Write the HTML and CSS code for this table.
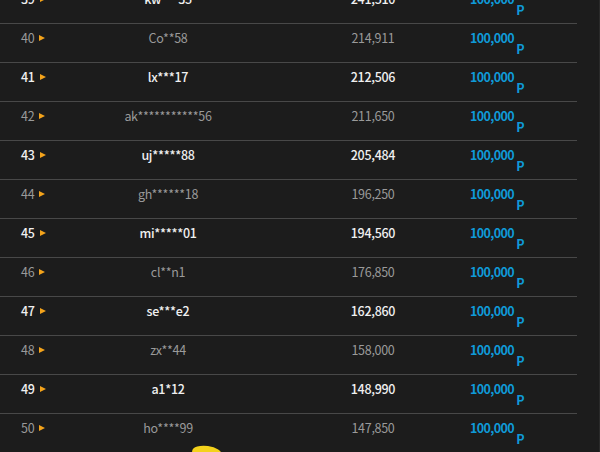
FILE: index.html
```html
<!DOCTYPE html>
<html lang="ko">
<head>
<meta charset="utf-8">
<link rel="stylesheet" href="styles.css">
</head>
<body>
<div class="page">
  <div class="board">
    <div class="row strong"><div class="rank">39<span class="arrow"></span></div><div class="name">kw***35</div><div class="score">241,510</div><div class="reward">100,000<span class="unit">P</span></div></div>
    <div class="row"><div class="rank">40<span class="arrow"></span></div><div class="name">Co**58</div><div class="score">214,911</div><div class="reward">100,000<span class="unit">P</span></div></div>
    <div class="row strong"><div class="rank">41<span class="arrow"></span></div><div class="name">lx***17</div><div class="score">212,506</div><div class="reward">100,000<span class="unit">P</span></div></div>
    <div class="row"><div class="rank">42<span class="arrow"></span></div><div class="name">ak***********56</div><div class="score">211,650</div><div class="reward">100,000<span class="unit">P</span></div></div>
    <div class="row strong"><div class="rank">43<span class="arrow"></span></div><div class="name">uj*****88</div><div class="score">205,484</div><div class="reward">100,000<span class="unit">P</span></div></div>
    <div class="row"><div class="rank">44<span class="arrow"></span></div><div class="name">gh******18</div><div class="score">196,250</div><div class="reward">100,000<span class="unit">P</span></div></div>
    <div class="row strong"><div class="rank">45<span class="arrow"></span></div><div class="name">mi*****01</div><div class="score">194,560</div><div class="reward">100,000<span class="unit">P</span></div></div>
    <div class="row"><div class="rank">46<span class="arrow"></span></div><div class="name">cl**n1</div><div class="score">176,850</div><div class="reward">100,000<span class="unit">P</span></div></div>
    <div class="row strong"><div class="rank">47<span class="arrow"></span></div><div class="name">se***e2</div><div class="score">162,860</div><div class="reward">100,000<span class="unit">P</span></div></div>
    <div class="row"><div class="rank">48<span class="arrow"></span></div><div class="name">zx**44</div><div class="score">158,000</div><div class="reward">100,000<span class="unit">P</span></div></div>
    <div class="row strong"><div class="rank">49<span class="arrow"></span></div><div class="name">a1*12</div><div class="score">148,990</div><div class="reward">100,000<span class="unit">P</span></div></div>
    <div class="row"><div class="rank">50<span class="arrow"></span></div><div class="name">ho****99</div><div class="score">147,850</div><div class="reward">100,000<span class="unit">P</span></div></div>
  </div>
  <div class="blob"></div>
</div>
</body>
</html>
```
FILE: styles.css
```css
html, body {
  margin: 0;
  padding: 0;
  background: #1c1c1c;
  overflow: hidden;
}
.page {
  position: relative;
  width: 600px;
  height: 452px;
  overflow: hidden;
  border-right: 1px solid #2a2a2a;
  box-sizing: border-box;
  font-family: "Noto Sans CJK KR", "Noto Sans", sans-serif;
  font-size: 12.5px;
  line-height: 18px;
  letter-spacing: -0.3px;
  color: #9a9a9a;
}
.board {
  width: 577px;
  margin-top: -15px;
}
.row {
  display: grid;
  grid-template-columns: 60px 216px 194px 1fr;
  align-items: baseline;
  padding-top: 5px;
  height: 33px;
  border-bottom: 1px solid #484848;
}
.row.strong {
  color: #f0f0f0;
  font-weight: 500;
}
.rank {
  padding-left: 21px;
  display: flex;
  align-items: center;
  gap: 5px;
}
.arrow {
  width: 0;
  height: 0;
  border-top: 3px solid transparent;
  border-bottom: 3px solid transparent;
  border-left: 6px solid #f3a31b;
}
.name, .score {
  text-align: center;
}
.reward {
  color: #0f9ad8;
  font-weight: 700;
  letter-spacing: -0.6px;
}
.unit {
  position: relative;
  top: 11px;
  margin-left: 2px;
}
.blob {
  position: absolute;
  left: 192px;
  top: 446px;
  width: 30px;
  height: 14px;
  border-radius: 50%;
  background: #f4d21c;
  transform: rotate(8deg);
}
```
